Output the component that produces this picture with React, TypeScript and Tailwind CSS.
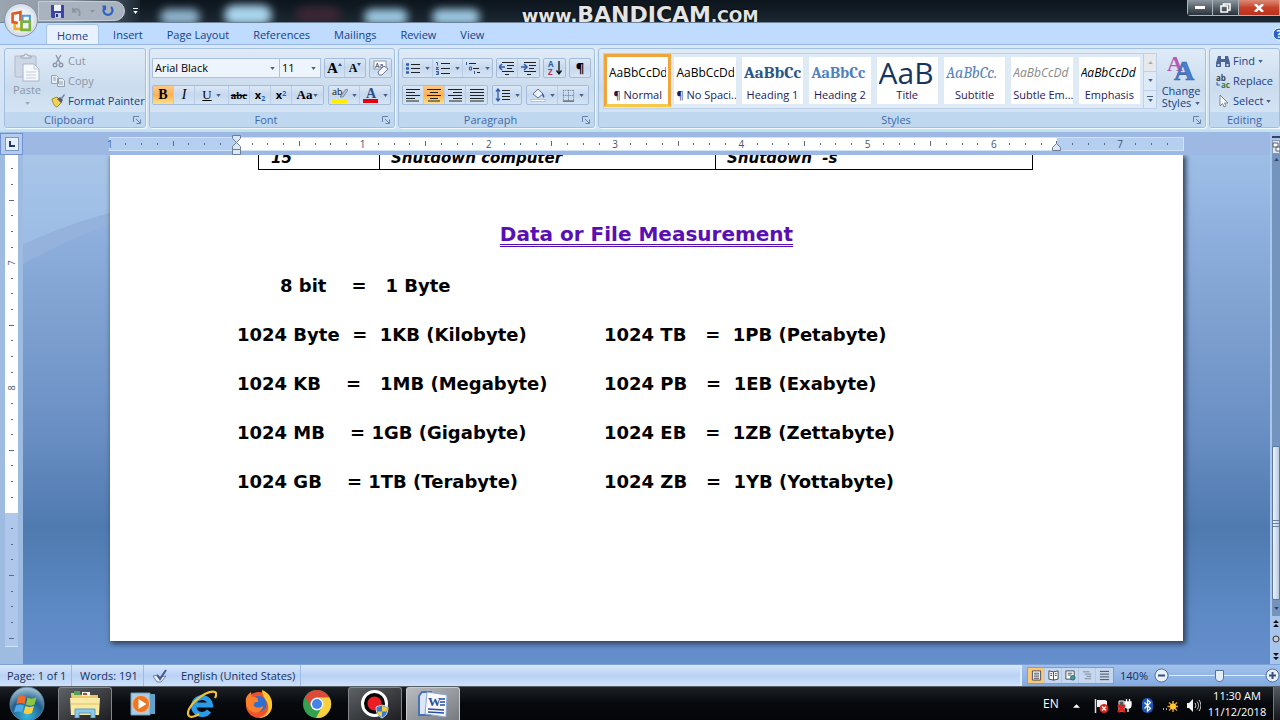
import type { ReactNode } from "react";
import clsx from "clsx";

const tabs = ["Home", "Insert", "Page Layout", "References", "Mailings", "Review", "View"];

const styles = [
  { name: "¶ Normal", sample: "AaBbCcDd", look: "text-[12px] text-black" },
  { name: "¶ No Spaci...", sample: "AaBbCcDd", look: "text-[12px] text-black" },
  { name: "Heading 1", sample: "AaBbCc", look: "font-serif font-bold text-[17px] text-[#2b5587]" },
  { name: "Heading 2", sample: "AaBbCc", look: "font-serif font-bold text-[16px] text-[#4f81bd]" },
  { name: "Title", sample: "AaB", look: "text-[30px] text-[#17365d]" },
  { name: "Subtitle", sample: "AaBbCc.", look: "font-serif italic text-[16px] text-[#5484bb]" },
  { name: "Subtle Em...", sample: "AaBbCcDd", look: "italic text-[12px] text-[#8a8a8a]" },
  { name: "Emphasis", sample: "AaBbCcDd", look: "italic text-[12px] text-black" },
];

const leftLines = [
  "1024 Byte  =  1KB (Kilobyte)",
  "1024 KB    =   1MB (Megabyte)",
  "1024 MB    = 1GB (Gigabyte)",
  "1024 GB    = 1TB (Terabyte)",
];

const rightLines = [
  "1024 TB   =  1PB (Petabyte)",
  "1024 PB   =  1EB (Exabyte)",
  "1024 EB   =  1ZB (Zettabyte)",
  "1024 ZB   =  1YB (Yottabyte)",
];

function Arrow({ className = "text-[#4a5f8a]" }: { className?: string }) {
  return (
    <svg viewBox="0 0 6 4" className={clsx("w-[5px] h-[3px] shrink-0", className)}>
      <path d="M0 0h6L3 4z" fill="currentColor" />
    </svg>
  );
}

type GroupProps = {
  title: string;
  launcher?: boolean;
  className?: string;
  children: ReactNode;
};

function Group({ title, launcher, className, children }: GroupProps) {
  return (
    <section
      className={clsx(
        "h-20 flex flex-col rounded-[3px] border border-[#a3bfde] overflow-hidden bg-linear-to-b from-[#dfebf7] via-[#cbdcee] to-[#d9e9f8] shadow-[1px_1px_0_#f0f8ff]",
        className
      )}
    >
      <div className="flex-1 min-h-0">{children}</div>
      <div className="h-[15px] bg-[#c0d7f0] flex items-center text-[#3e6aaa]">
        <span className="flex-1 text-center leading-[14px]">{title}</span>
        {launcher && (
          <button type="button" aria-label={`${title} options`} className="mr-1">
            <svg viewBox="0 0 8 8" className="size-[8px]" fill="none" stroke="#6684aa">
              <path d="M.5 6V.5H6M3 3l4 4M7.5 3.5v4h-4" />
            </svg>
          </button>
        )}
      </div>
    </section>
  );
}

function Box({ children }: { children: ReactNode }) {
  return (
    <div className="h-5 flex border border-[#a4bbd9] rounded-[2px] divide-x divide-[#b9cde6] bg-linear-to-b from-[#dbe8f6] via-[#c6d8ee] to-[#d6e5f5]">
      {children}
    </div>
  );
}

type ToolProps = {
  label: string;
  active?: boolean;
  arrow?: boolean;
  width?: string;
  children: ReactNode;
};

function Tool({ label, active, arrow, width = "w-[21px]", children }: ToolProps) {
  return (
    <button
      type="button"
      aria-label={label}
      className={clsx(
        "flex items-center justify-center gap-1 text-black",
        width,
        active && "bg-linear-to-b from-[#fbc987] via-[#fbb04e] to-[#fde08c]"
      )}
    >
      {children}
      {arrow && <Arrow />}
    </button>
  );
}

function Lines({ d, children }: { d: string; children?: ReactNode }) {
  return (
    <svg viewBox="0 0 16 14" className="w-[16px] h-[14px] shrink-0" fill="none" stroke="#222" strokeWidth="1">
      <path d={d} />
      {children}
    </svg>
  );
}

function ClipboardGroup() {
  return (
    <Group title="Clipboard" launcher className="w-[142px]">
      <div className="flex h-full">
        <button type="button" className="w-[44px] shrink-0 pt-1 flex flex-col items-center text-[#8d95a3]">
          <svg viewBox="0 0 26 29" className="w-[26px] h-[29px]">
            <rect x="1" y="3" width="21" height="21" rx="1" fill="#cdd7e6" stroke="#aeb9cb" />
            <path d="M7 5V3h3a2 2 0 0 1 4 0h3v2z" fill="#e7ecf3" stroke="#98a3b5" />
            <path d="M9 11h11l5 5v12H9z" fill="#f6f9fc" stroke="#a9b4c6" />
            <path d="M20 11v5h5M12 19h10M12 22h10M12 25h10" fill="none" stroke="#c3ccda" />
          </svg>
          <span className="leading-[16px]">Paste</span>
          <span className="pt-1">
            <Arrow className="text-[#9ba6b8]" />
          </span>
        </button>
        <div className="flex flex-col pt-[2px] pl-[2px]">
          <button type="button" className="h-[20px] flex items-center gap-[3px] text-[#8d95a3]">
            <svg viewBox="0 0 14 14" className="size-[14px]" fill="none" stroke="#8d99ac" strokeWidth="1.4">
              <path d="M5 1l4 8M10 1L5 9" />
              <circle cx="4" cy="11" r="1.8" />
              <circle cx="10" cy="11" r="1.8" />
            </svg>
            Cut
          </button>
          <button type="button" className="h-[20px] flex items-center gap-[3px] text-[#8d95a3]">
            <svg viewBox="0 0 14 14" className="size-[14px]" fill="#e8eef6" stroke="#94a0b4">
              <path d="M.5 1.5h5l2 2v6h-7zM6.500 4.500h5l2 2v6h-7z" />
              <path d="M2 4h3M2 6h3M8 8h4M8 10h4" />
            </svg>
            Copy
          </button>
          <button type="button" className="h-[20px] flex items-center gap-[3px] whitespace-nowrap text-[#15428b]">
            <svg viewBox="0 0 14 14" className="size-[14px] shrink-0">
              <path d="M1 5l5-2 5 5-5 5c-2 0-4-3-5-8z" fill="#f4d34e" stroke="#a88a24" />
              <path d="M6 5l3-2 3 3-2 3z" fill="#555f75" />
              <path d="M10 4l3-4 1 1-3 4z" fill="#6c7da0" />
            </svg>
            Format Painter
          </button>
        </div>
      </div>
    </Group>
  );
}

function FontGroup() {
  return (
    <Group title="Font" launcher className="w-[246px]">
      <div className="px-[2px] pt-[9px] flex flex-col gap-[7px]">
        <div className="flex gap-[3px]">
          <div className="flex h-5">
            <label className="relative flex items-center w-[128px] bg-[#eef4fb] border border-[#abc1de]">
              <select aria-label="Font name" className="appearance-none w-full px-[2px] text-black outline-none">
                <option>Arial Black</option>
              </select>
              <span className="absolute right-1">
                <Arrow />
              </span>
            </label>
            <label className="relative flex items-center w-[41px] bg-[#eef4fb] border border-l-0 border-[#abc1de]">
              <select aria-label="Font size" className="appearance-none w-full px-[2px] text-black outline-none">
                <option>11</option>
              </select>
              <span className="absolute right-1">
                <Arrow />
              </span>
            </label>
          </div>
          <Box>
            <Tool label="Grow font" width="w-5">
              <span className="font-['Liberation_Serif'] font-bold text-[15px] leading-none">A</span>
              <svg viewBox="0 0 4 3" className="w-1 h-[3px] -ml-1 mb-2">
                <path d="M0 3h4L2 0z" fill="#2b4c8c" />
              </svg>
            </Tool>
            <Tool label="Shrink font" width="w-5">
              <span className="font-['Liberation_Serif'] font-bold text-[12px] leading-none">A</span>
              <svg viewBox="0 0 4 3" className="w-1 h-[3px] -ml-1 mb-2">
                <path d="M0 0h4L2 3z" fill="#2b4c8c" />
              </svg>
            </Tool>
          </Box>
          <Box>
            <Tool label="Clear formatting">
              <svg viewBox="0 0 18 16" className="w-[18px] h-4">
                <rect x="2" y="1" width="12" height="8" fill="#fff" stroke="#8e9ab0" />
                <text x="3" y="8" fontSize="7" fill="#222">Aa</text>
                <path d="M6 12l6-6 4 3-6 6H7z" fill="#f4f6fa" stroke="#6d7d9a" />
              </svg>
            </Tool>
          </Box>
        </div>
        <div className="flex gap-1">
          <Box>
            <Tool label="Bold" active>
              <b className="font-['Liberation_Serif'] text-[14px]">B</b>
            </Tool>
            <Tool label="Italic">
              <i className="font-['Liberation_Serif'] text-[14px]">I</i>
            </Tool>
            <Tool label="Underline" arrow width="w-[34px]">
              <u className="font-['Liberation_Serif'] text-[13px]">U</u>
            </Tool>
            <Tool label="Strikethrough">
              <s className="font-['Liberation_Serif'] font-bold text-[11px]">abc</s>
            </Tool>
            <Tool label="Subscript">
              <span className="font-bold text-[11px]">
                x<sub className="text-[7px] text-[#2b5fb5]">2</sub>
              </span>
            </Tool>
            <Tool label="Superscript">
              <span className="font-bold text-[11px]">
                x<sup className="text-[7px] text-[#2b5fb5]">2</sup>
              </span>
            </Tool>
            <Tool label="Change case" width="w-[31px]" arrow>
              <span className="font-['Liberation_Serif'] font-bold text-[13px] -mr-[3px]">Aa</span>
            </Tool>
          </Box>
          <Box>
            <Tool label="Highlight" arrow width="w-[31px]">
              <svg viewBox="0 0 16 16" className="size-4">
                <text x="0" y="8" fontSize="9" fill="#111">ab</text>
                <path d="M8 10l6-8 2 1-5 7z" fill="#b9c4d6" stroke="#5b6a86" strokeWidth=".7" />
                <path d="M0 12h15v4H0z" fill="#ffee00" />
              </svg>
            </Tool>
            <Tool label="Font color" arrow width="w-[30px]">
              <svg viewBox="0 0 16 16" className="size-4">
                <text x="3" y="11" fontSize="14" fontWeight="700" fontFamily="Liberation Serif" fill="#2c4d86">A</text>
                <path d="M0 12h15v4H0z" fill="#e8000f" />
              </svg>
            </Tool>
          </Box>
        </div>
      </div>
    </Group>
  );
}

function ParagraphGroup() {
  return (
    <Group title="Paragraph" launcher className="w-[197px]">
      <div className="px-[3px] pt-[9px] flex flex-col gap-[7px]">
        <div className="flex gap-[3px]">
          <Box>
            <Tool label="Bullets" arrow width="w-[30px]">
              <Lines d="M6 3.500h9M6 7.500h9M6 11.500h9">
                <path d="M1 3.500h3M1 7.500h3M1 11.500h3" stroke="#2f5fb0" strokeWidth="2.500" />
              </Lines>
            </Tool>
            <Tool label="Numbering" arrow width="w-[30px]">
              <Lines d="M6 2.500h9M6 7.500h9M6 12.500h9">
                <path d="M1 1.500h1.500v3M1 6.500h2.500L1 8.500h3M1 10.500h2.500v3H1M1.500 12h2" stroke="#2f5fb0" />
              </Lines>
            </Tool>
            <Tool label="Multilevel list" arrow width="w-[29px]">
              <Lines d="M4 2.500h7M8 7.500h6M12 11.500h3">
                <path d="M1.500 1v3M4.500 6v3h2v-3h-2M9.500 10v3" stroke="#2f5fb0" />
              </Lines>
            </Tool>
          </Box>
          <Box>
            <Tool label="Decrease indent">
              <Lines d="M3 1.500h12M8 4.500h7M8 7.500h5M3 10.500h12M6 13.500h4">
                <path d="M0 6h6M3 3L0 6l3 3" stroke="#2f5fb0" strokeWidth="1.500" />
              </Lines>
            </Tool>
            <Tool label="Increase indent">
              <Lines d="M3 1.500h12M8 4.500h7M8 7.500h5M3 10.500h12M6 13.500h4">
                <path d="M0 6h6M3 3l3 3-3 3" stroke="#2f5fb0" strokeWidth="1.500" />
              </Lines>
            </Tool>
          </Box>
          <Box>
            <Tool label="Sort">
              <svg viewBox="0 0 16 16" className="size-4">
                <text x="1" y="7" fontSize="8" fontWeight="700" fill="#2f5fb0">A</text>
                <text x="1" y="15" fontSize="8" fontWeight="700" fill="#b0344a">Z</text>
                <path d="M12 1v12M9.500 10.500L12 14l2.500-3.500" fill="none" stroke="#111" strokeWidth="1.300" />
              </svg>
            </Tool>
          </Box>
          <Box>
            <Tool label="Show marks" width="w-5">
              <span className="font-bold text-[13px]">¶</span>
            </Tool>
          </Box>
        </div>
        <div className="flex gap-1">
          <Box>
            <Tool label="Align left">
              <Lines d="M1 1.500h14M1 4.500h9M1 7.500h14M1 10.500h9M1 13h13" />
            </Tool>
            <Tool label="Center" active>
              <Lines d="M1 1.500h14M4 4.500h8M1 7.500h14M4 10.500h8M2 13h12" />
            </Tool>
            <Tool label="Align right">
              <Lines d="M1 1.500h14M6 4.500h9M1 7.500h14M6 10.500h9M2 13h13" />
            </Tool>
            <Tool label="Justify">
              <Lines d="M1 1.500h14M1 4.500h14M1 7.500h14M1 10.500h14M1 13h14" />
            </Tool>
          </Box>
          <Box>
            <Tool label="Line spacing" arrow width="w-[28px]">
              <Lines d="M7 2.500h8M7 5.500h8M7 8.500h8M7 11.500h8">
                <path d="M3 1v12M1 3.500L3 1l2 2.500M1 10.500L3 13l2-2.500" stroke="#2f5fb0" strokeWidth="1.300" />
              </Lines>
            </Tool>
          </Box>
          <Box>
            <Tool label="Shading" arrow width="w-[31px]">
              <svg viewBox="0 0 16 14" className="w-4 h-[14px]">
                <path d="M3 6l5-5 5 5-5 4z" fill="#eef3fa" stroke="#5f6f8c" />
                <path d="M12 5c2 1 3 3 2 5-1-1-2-2-2-5z" fill="#2f5fb0" />
                <path d="M1 11.500h14v2H1z" fill="#fff" stroke="#8894a8" strokeWidth=".5" />
              </svg>
            </Tool>
            <Tool label="Borders" arrow width="w-[30px]">
              <svg viewBox="0 0 14 14" className="size-[13px]" fill="none" stroke="#5f6f8c">
                <path d="M1 1.500h12M1 7h12M1.500 1v12M7 1v12M12.500 1v12" strokeDasharray="1 1" />
                <path d="M1 13h12" stroke="#222" />
              </svg>
            </Tool>
          </Box>
        </div>
      </div>
    </Group>
  );
}

function StylesGroup() {
  return (
    <Group title="Styles" launcher className="flex-1 min-w-0">
      <div className="flex pt-1 pl-1">
        <div className="flex-1 min-w-0 h-[56px] flex border border-[#bdd2ea] bg-[#dfeaf7]">
          {styles.map((style, i) => (
            <button
              key={style.name}
              type="button"
              className={clsx(
                "flex-1 min-w-0 h-[53px] border-[3px] text-[#1e1a5a]",
                i === 0 ? "border-[#efa53a] border-b-[#f5c94a]" : "border-transparent"
              )}
            >
              <span className="h-full flex flex-col bg-white overflow-hidden px-[2px]">
                <span className={clsx("h-[30px] leading-[32px] overflow-hidden whitespace-nowrap text-left", style.look)}>
                  {style.sample}
                </span>
                <span className="leading-[15px] text-center whitespace-nowrap">{style.name}</span>
              </span>
            </button>
          ))}
          <div className="w-[13px] flex flex-col border-l border-[#bdd2ea] divide-y divide-[#bdd2ea]">
            <button type="button" aria-label="Scroll styles up" className="flex-1 flex items-center justify-center bg-[#e8e9ec]">
              <Arrow className="rotate-180 text-[#a9adb5]" />
            </button>
            <button type="button" aria-label="Scroll styles down" className="flex-1 flex items-center justify-center">
              <Arrow />
            </button>
            <button type="button" aria-label="More styles" className="flex-1 flex flex-col gap-[2px] items-center justify-center">
              <span className="w-[6px] h-px bg-[#4a5f8a]" />
              <Arrow />
            </button>
          </div>
        </div>
        <button type="button" className="w-[48px] flex flex-col items-center text-[#15428b] leading-[12px]">
          <svg viewBox="0 0 28 28" className="size-[28px] shrink-0" fontFamily="Liberation Serif" fontWeight="700">
            <text x="0" y="18" fontSize="22" fill="#b957b5">A</text>
            <text x="7" y="27" fontSize="28" fill="#4b7fd0" stroke="#2f5da8" strokeWidth=".6">A</text>
          </svg>
          <span className="mt-1">Change</span>
          <span className="flex items-center gap-1">
            Styles <Arrow />
          </span>
        </button>
      </div>
    </Group>
  );
}

function EditingGroup() {
  return (
    <Group title="Editing" className="w-[71px]">
      <div className="flex flex-col pt-[2px] pl-[6px] text-[#15428b]">
        <button type="button" className="h-[20px] flex items-center gap-[3px]">
          <svg viewBox="0 0 14 13" className="w-[14px] h-[13px] shrink-0" fill="#4b6594">
            <path d="M2 1h3v3h4V1h3l2 7v4H9V7H5v5H0V8z" />
            <path d="M1.500 9h2v2h-2zM10.500 9h2v2h-2z" fill="#cfdcf0" />
          </svg>
          Find <Arrow />
        </button>
        <button type="button" className="h-[20px] flex items-center gap-[3px] whitespace-nowrap">
          <svg viewBox="0 0 14 14" className="size-[14px] shrink-0" fontWeight="700">
            <text x="0" y="7" fontSize="8" fill="#444">ab</text>
            <text x="5" y="14" fontSize="8" fill="#3a7d3a">ac</text>
            <path d="M1 8v3h3" fill="none" stroke="#2f5fb0" />
          </svg>
          Replace
        </button>
        <button type="button" className="h-[20px] flex items-center gap-[3px]">
          <svg viewBox="0 0 14 14" className="size-[14px] shrink-0">
            <path d="M4 1v11l2.500-2.500L8 13l2-1-1.500-3H12z" fill="#fff" stroke="#7b8698" />
          </svg>
          Select <Arrow />
        </button>
      </div>
    </Group>
  );
}

function TitleBar() {
  return (
    <header className="relative h-[23px] flex items-start justify-between bg-linear-to-b from-[#0d151d] to-[#1b2731] border-b border-[#6f8399] overflow-hidden">
      <div className="absolute inset-0 flex items-center pl-[160px] gap-6 blur-[4px]">
        <span className="w-10 h-4 mt-3 rounded-full bg-[#8fb4cc]" />
        <span className="w-12 h-5 mt-2 rounded-full bg-[#a9d5ec]" />
        <span className="w-11 h-4 mt-2 rounded-full bg-[#3c2634]" />
        <span className="w-11 h-4 mt-3 rounded-full bg-[#9dc9e2]" />
        <span className="w-12 h-4 mt-3 rounded-full bg-[#9dc9e2]" />
      </div>
      <div className="relative h-[22px] w-[140px] bg-linear-to-r from-[#9aa5b0] via-[#8d98a4] to-[#1b2731]">
        <div className="h-5 mt-px ml-[38px] w-[87px] flex items-center justify-between pl-3 pr-[10px] rounded-r-full border border-[#c3ccd6] bg-[#a9b3bf]">
          <button type="button" aria-label="Save">
            <svg viewBox="0 0 13 13" className="size-[13px]">
              <path d="M0 0h13v13H1L0 12z" fill="#3b45a8" />
              <path d="M3 0h7v6H3z" fill="#eef2fb" />
              <path d="M4 8h6v5H4z" fill="#c6cfe8" />
              <path d="M5 9h2v3H5z" fill="#2b3280" />
            </svg>
          </button>
          <button type="button" aria-label="Undo" className="flex items-center gap-2 text-[#87919e]">
            <svg viewBox="0 0 12 12" className="size-[11px]" fill="none" stroke="#8b96a4" strokeWidth="2">
              <path d="M2 2v4h4M2 6c3-5 9-3 7 5" />
            </svg>
            <Arrow className="text-[#87919e]" />
          </button>
          <button type="button" aria-label="Redo">
            <svg viewBox="0 0 12 12" className="size-[12px]" fill="none" stroke="#2d62c4" strokeWidth="2.200">
              <path d="M3 2a4.500 4.500 0 1 0 6 0M3 5V1.500H.500" />
            </svg>
          </button>
        </div>
        <button type="button" aria-label="Customize toolbar" className="absolute right-[2px] top-2 flex flex-col gap-[2px] items-center">
          <span className="w-[5px] h-px bg-white" />
          <Arrow className="text-white" />
        </button>
      </div>
      <div className="relative h-4 flex rounded-bl border border-t-0 border-[#aab4be] divide-x divide-[#aab4be]">
        <button type="button" aria-label="Minimize" className="w-[25px] flex items-center justify-center bg-linear-to-b from-[#8d979f] to-[#2a333b]">
          <span className="w-[10px] h-[3px] bg-white" />
        </button>
        <button type="button" aria-label="Restore" className="w-[26px] flex items-center justify-center bg-linear-to-b from-[#8d979f] to-[#2a333b]">
          <svg viewBox="0 0 11 10" className="w-[11px] h-[10px]" fill="none" stroke="#fff" strokeWidth="1.500">
            <path d="M3.500 2.500V1h6.500v6H8M1 3h6.500v6H1z" />
          </svg>
        </button>
        <button type="button" aria-label="Close" className="w-[40px] flex items-center justify-center bg-linear-to-b from-[#dc8a78] via-[#c8412a] to-[#b8311c]">
          <svg viewBox="0 0 10 8" className="w-[10px] h-[8px]" stroke="#fff" strokeWidth="2.500">
            <path d="M1 0l8 8M9 0L1 8" />
          </svg>
        </button>
      </div>
      <div className="absolute inset-x-0 top-1 flex justify-center items-baseline pointer-events-none text-[#e4e4e4] font-['DejaVu_Sans'] font-bold leading-[22px] [text-shadow:0_0_3px_#000]">
        <span className="text-[18px]">www.</span>
        <span className="text-[22px]">BANDICAM</span>
        <span className="text-[16px]">.COM</span>
      </div>
    </header>
  );
}

function OfficeButton() {
  return (
    <button
      type="button"
      aria-label="Office menu"
      className="absolute left-1 top-[3px] size-[34px] rounded-full border border-[#8594a8] bg-radial from-white via-[#e9edf3] to-[#b3bfce] flex items-center justify-center"
    >
      <svg viewBox="0 0 22 22" className="size-[23px]" fill="none" strokeWidth="2.500">
        <path d="M10 11.500V3L2.500 4.500v8l5 1" stroke="#e2581c" />
        <path d="M12 6.500h7v6h-7z" stroke="#4f9be0" strokeWidth="2" />
        <path d="M4.500 14v5H11v-6" stroke="#f2b21c" />
        <path d="M11 12h8v8h-8z" stroke="#7ab33c" />
      </svg>
    </button>
  );
}

// one cell is an eighth of an inch, centred on its mark
function HorizontalRuler() {
  const marks = Array.from({ length: 67 }, (_, i) => i - 7);
  return (
    <div className="relative h-3 flex bg-[#b4cff0] outline outline-[#cfe2f8] text-[10px] leading-3 text-[#44546e]">
      <div className="absolute inset-0 flex">
        <span className="flex-[8]" />
        <span className="flex-[52] bg-white" />
        <span className="flex-[8]" />
      </div>
      <span className="relative flex-[1] min-w-0 -indent-[3px]">1</span>
      {marks.map((m) => (
        <span key={m} className="relative flex-[2] min-w-0 flex items-center justify-center">
          {m % 8 === 0 && m > 0 ? (
            m / 8
          ) : m === 0 ? null : m % 4 === 0 ? (
            <span className="w-px h-[5px] bg-[#5b6b85]" />
          ) : (
            <span className="w-px h-[2px] bg-[#5b6b85]" />
          )}
        </span>
      ))}
      <span className="flex-[1] min-w-0" />
      <div className="absolute inset-x-0 -top-[3px] flex">
        <span className="flex-[8]" />
        <div className="flex-[52] flex justify-between items-start">
          <svg viewBox="0 0 9 20" className="w-[9px] h-5 -ml-[4px]" fill="#dce8f6" stroke="#6d7d96">
            <path d="M.5.5h8v3l-4 4-4-4zM.5 14.500v-3l4-4 4 4v3zM.5 14.500h8v5h-8z" />
          </svg>
          <svg viewBox="0 0 9 8" className="w-[9px] h-2 mt-2 -mr-[4px]" fill="#dce8f6" stroke="#6d7d96">
            <path d="M.5 7.500v-3l4-4 4 4v3z" />
          </svg>
        </div>
        <span className="flex-[8]" />
      </div>
    </div>
  );
}

function VerticalRuler() {
  const marks = Array.from({ length: 31 }, (_, i) => i + 50);
  return (
    <div className="w-[23px] bg-[#9ebce2] pl-[5px] pr-[5px] pb-[17px] flex">
      <div className="flex-1 flex flex-col pt-[6px] border-b border-[#cfe2f8] bg-linear-to-b from-white from-73% to-[#aec7ea] to-73% text-[9px] leading-3 text-[#44546e]">
        {marks.map((m) => (
          <span key={m} className="flex-1 min-h-0 flex items-center justify-center">
            {m === 56 || m === 64 ? (
              <span className="-rotate-90">{m / 8}</span>
            ) : m === 72 ? null : m % 4 === 0 ? (
              <span className="w-[5px] h-px bg-[#5b6b85]" />
            ) : (
              <span className="w-[2px] h-px bg-[#5b6b85]" />
            )}
          </span>
        ))}
      </div>
    </div>
  );
}

function Page() {
  return (
    <article className="mb-[23px] flex-1 min-w-0 bg-white overflow-hidden shadow-[2px_2px_5px_1px_#33445c] font-['DejaVu_Sans'] font-bold text-black">
      <table className="ml-[148px] -mt-[14px] w-[775px] table-fixed border-collapse italic text-[15px]">
        <tbody>
          <tr className="h-7 align-bottom">
            <td className="w-[121px] border border-black pl-3 pb-[3px] leading-none">15</td>
            <td className="w-[336px] border border-black pl-[11px] pb-[3px] leading-none">Shutdown computer</td>
            <td className="border border-black pl-[11px] pb-[3px] leading-none whitespace-pre">Shutdown  -s</td>
          </tr>
        </tbody>
      </table>
      <h1 className="mt-[46px] text-center text-[20px] leading-[36px] text-[#5a0fb4]">
        <span className="underline decoration-double decoration-1 underline-offset-3">Data or File Measurement</span>
      </h1>
      <div className="mt-[9px] pl-[127px] text-[18px] leading-[49px] whitespace-pre">
        <p className="pl-[43px]">8 bit    =   1 Byte</p>
        <div className="flex">
          <div className="w-[367px]">
            {leftLines.map((line) => (
              <p key={line}>{line}</p>
            ))}
          </div>
          <div>
            {rightLines.map((line) => (
              <p key={line}>{line}</p>
            ))}
          </div>
        </div>
      </div>
    </article>
  );
}

function ScrollColumn() {
  return (
    <div className="w-[10px] shrink-0 flex flex-col items-center overflow-hidden bg-[#a9c4ea] border-l-2 border-[#a8c8ee]">
      <span className="h-[2px] mt-1 w-full bg-[#33435f]" />
      <button type="button" aria-label="View ruler" className="h-[14px] mt-[2px] w-full bg-[#dfe6f0] border border-[#8c99ad] flex items-center justify-center">
        <svg viewBox="0 0 8 10" className="w-2 h-[10px] shrink-0" fill="#fff" stroke="#55627a">
          <path d="M1 1h5v4H1zM4 5h4v4H4z" />
        </svg>
      </button>
      <div className="flex-1 w-full flex flex-col items-center bg-[#7493bd]">
        <span className="py-1">
          <Arrow className="rotate-180 text-[#33435f]" />
        </span>
        <span className="flex-[283]" />
        <div className="flex-[153] w-full bg-linear-to-r from-[#f2f6fc] to-[#b7c8e0] border border-[#5b77a5] rounded-l-[2px] flex flex-col items-end justify-center gap-[2px]">
          <span className="w-[6px] h-px bg-[#6b7f9f]" />
          <span className="w-[6px] h-px bg-[#6b7f9f]" />
          <span className="w-[6px] h-px bg-[#6b7f9f]" />
        </div>
        <span className="h-4 flex items-center">
          <Arrow className="text-[#27407c]" />
        </span>
      </div>
      <svg viewBox="0 0 8 48" className="w-2 h-12 shrink-0">
        <path d="M1 7l3-3 3 3zM1 11l3-3 3 3zM1 37h6l-3 3zM1 41h6l-3 3z" fill="#111" />
        <circle cx="4" cy="23" r="3" fill="#c9cdd4" stroke="#333" />
      </svg>
    </div>
  );
}

function StatusBar() {
  return (
    <footer className="h-[22px] flex items-stretch border-t border-[#7ba0d4] bg-linear-to-b from-[#d8e7fb] via-[#b9d2f5] to-[#cfe1fa] text-[#15305f]">
      <span className="w-[72px] pl-[7px] flex items-center border-r border-[#9dbbe2]">Page: 1 of 1</span>
      <span className="w-[72px] pl-2 flex items-center border-r border-[#9dbbe2]">Words: 191</span>
      <span className="w-[31px] flex items-center justify-center">
        <svg viewBox="0 0 16 14" className="w-4 h-[14px]">
          <path d="M1 7l5-1 2 2 6-1-5 6H5z" fill="#e9eef8" stroke="#7383a8" />
          <path d="M5 6l3 4 6-9" fill="none" stroke="#46598c" strokeWidth="2" />
        </svg>
      </span>
      <span className="w-[126px] pl-[6px] flex items-center border-r border-[#9dbbe2]">English (United States)</span>
      <span className="flex-1" />
      <div className="w-[260px] shrink-0 pl-[5px] flex items-center border-l-2 border-[#dbe9fb] bg-linear-to-b from-[#a3c1eb] to-[#82aae2] overflow-hidden">
        <div className="h-[17px] flex border border-[#7f9fcb] bg-[#c6d8ef] divide-x divide-[#b2c8e6]">
          {["Print layout", "Full screen reading", "Web layout", "Outline", "Draft"].map((view, i) => (
            <button
              key={view}
              type="button"
              aria-label={view}
              className={clsx("w-[17px] flex items-center justify-center", i === 0 && "bg-[#fbc878]")}
            >
              <svg viewBox="0 0 12 12" className="size-[11px]" fill="none" stroke="#3d4450">
                {i === 0 && <path d="M1.500 1h9v10h-9zM3 3.500h6M3 5.500h6M3 7.500h6M3 9.500h6" fill="#fff" />}
                {i === 1 && <path d="M6 2L1 1v9l5 1 5-1V1zM6 2v9M2.500 4h2M2.500 6h2M7.500 4h2M7.500 6h2" fill="#fff" />}
                {i === 2 && (
                  <>
                    <path d="M1 1h9v9H1zM3 3.500h5M3 5.500h4" fill="#fff" />
                    <circle cx="8.500" cy="8.500" r="2.500" fill="#3f9a8d" stroke="#2d6c84" />
                  </>
                )}
                {i === 3 && <path d="M1 2h7M3 4.500h7M5 7h5M3 9.500h7" stroke="#7a8598" />}
                {i === 4 && <path d="M1 1.500h10M1 4.500h10M1 7.500h10M1 10.500h10" />}
              </svg>
            </button>
          ))}
        </div>
        <span className="w-[42px] text-center">140%</span>
        <button type="button" aria-label="Zoom out" className="shrink-0">
          <svg viewBox="0 0 15 15" className="size-[15px]">
            <circle cx="7.500" cy="7.500" r="6.500" fill="#e9f0fa" stroke="#54709f" />
            <path d="M4 7.500h7" stroke="#34507f" strokeWidth="2" />
          </svg>
        </button>
        <label className="relative w-[96px] shrink-0 flex items-center">
          <input
            type="range"
            aria-label="Zoom"
            min="0"
            max="100"
            defaultValue="53"
            className="appearance-none w-full h-px bg-[#e4eefb] [&::-webkit-slider-thumb]:appearance-none [&::-webkit-slider-thumb]:w-[9px] [&::-webkit-slider-thumb]:h-3 [&::-webkit-slider-thumb]:bg-[#e4ecf8] [&::-webkit-slider-thumb]:border [&::-webkit-slider-thumb]:border-[#54709f] [&::-webkit-slider-thumb]:rounded-b-[4px]"
          />
        </label>
        <button type="button" aria-label="Zoom in" className="shrink-0">
          <svg viewBox="0 0 15 15" className="size-[15px]">
            <circle cx="7.500" cy="7.500" r="6.500" fill="#e9f0fa" stroke="#54709f" />
            <path d="M4 7.500h7M7.500 4v7" stroke="#34507f" strokeWidth="2" />
          </svg>
        </button>
      </div>
    </footer>
  );
}

function TaskButton({ label, frame, children }: { label: string; frame?: string; children: ReactNode }) {
  return (
    <button type="button" aria-label={label} className={clsx("w-[54px] h-full flex items-center justify-center", frame)}>
      {children}
    </button>
  );
}

const openFrame = "border border-b-0 border-[#82868b] rounded-t-[3px] bg-linear-to-br from-[#5f6266] to-[#1d1f22]";

function Taskbar() {
  return (
    <nav className="h-[34px] flex bg-linear-to-b from-[#1c2126] via-[#07090d] to-[#04060a] border-t border-[#565f68] text-white">
      <div className="flex gap-1">
        <TaskButton label="Start">
          <svg viewBox="0 0 36 36" className="size-9 shrink-0">
            <defs>
              <radialGradient id="orb" cx="50%" cy="85%" r="80%">
                <stop offset="0" stopColor="#35b5e0" />
                <stop offset=".6" stopColor="#215f8e" />
                <stop offset="1" stopColor="#9dbfd4" />
              </radialGradient>
            </defs>
            <circle cx="18" cy="18" r="17" fill="url(#orb)" stroke="#5f7f94" />
            <path d="M9 11c3-2 5-2 8 0l-1.500 7c-3-1.500-5-1.500-8 0z" fill="#ee6a2c" />
            <path d="M18.500 11.500c3 1.500 5 1.500 9 0l-2 7c-3 1.500-5 1.500-8.500 0z" fill="#8dc63f" />
            <path d="M7 19.500c3-1.500 5-1.500 8 0l-2 7c-3-1.500-5-1.500-8 0z" fill="#4fa8e8" />
            <path d="M16.500 20c3 1.500 5 1.500 8.500 0l-2 7c-3 1.500-5 1.500-8.500 0z" fill="#fbcf3a" />
          </svg>
        </TaskButton>
        <TaskButton label="Windows Explorer" frame={openFrame}>
          <svg viewBox="0 0 32 28" className="w-8 h-7">
            <path d="M2 3h8l2 2h17v20H3z" fill="#e9c86a" />
            <path d="M5 1h6v4H5z" fill="#4fa35c" />
            <path d="M13 2h8v4h-8z" fill="#f3f3ee" />
            <path d="M14 3h4v2h-4z" fill="#c8412a" />
            <path d="M1 8h30l-1 17H2z" fill="#fae9a4" />
            <path d="M2 14h28" stroke="#f0d580" strokeWidth="2" />
            <path d="M6 28v-9h20v9h-4v-5H10v5z" fill="#8ecbea" stroke="#5b9dc4" />
          </svg>
        </TaskButton>
        <TaskButton label="Media Player">
          <svg viewBox="0 0 26 26" className="size-[26px]">
            <path d="M6 3h19v20H6z" fill="#5fa3cc" />
            <path d="M1 2h19v22H1z" fill="#a5cfe8" stroke="#6d9dbd" />
            <circle cx="11" cy="13" r="8.500" fill="#ee7623" stroke="#f7b98b" />
            <path d="M8.500 8l8 5-8 5z" fill="#fff" />
          </svg>
        </TaskButton>
        <TaskButton label="Internet Explorer">
          <svg viewBox="0 0 32 30" className="w-8 h-[30px]" fill="none">
            <path d="M9 16h16.500a8.500 8.500 0 1 0-1.500 6" stroke="#2c9be6" strokeWidth="5" />
            <path d="M4 27C-2 20 20 0 30 3c2 1 1 4 0 6M4 27c2 2 7 0 10-2" stroke="#f1c232" strokeWidth="2.200" />
          </svg>
        </TaskButton>
        <TaskButton label="Firefox">
          <svg viewBox="0 0 30 30" className="size-[30px]">
            <circle cx="15" cy="16" r="13" fill="#f0512b" />
            <path d="M18 1c8 3 11 10 10 17-1 7-7 11-13 11 8-3 10-8 9-13-1-5-6-8-6-15z" fill="#fdc52e" />
            <circle cx="14.500" cy="15" r="8" fill="#2f6fd0" />
            <path d="M2 9c2-4 4-5 5-6l1 5c4-1 7 2 6 5-3 0-5 1-4 4 3 3 7 1 9 0 0 5-6 8-10 6C3 21 1 15 2 9z" fill="#f9802c" />
          </svg>
        </TaskButton>
        <TaskButton label="Chrome">
          <svg viewBox="0 0 30 30" className="size-[30px]">
            <circle cx="15" cy="15" r="14" fill="#34a050" />
            <path d="M2.900 8A14 14 0 0 1 27.100 8L15 9a6 6 0 0 0-5.500 9z" fill="#de4a3a" />
            <path d="M27.500 8.500A14 14 0 0 1 14 29l6-11a6 6 0 0 0-4-9.500z" fill="#fbd03c" />
            <circle cx="15" cy="15" r="6.500" fill="#fff" />
            <circle cx="15" cy="15" r="5" fill="#4683ea" />
          </svg>
        </TaskButton>
        <TaskButton label="Bandicam" frame={openFrame}>
          <svg viewBox="0 0 30 30" className="size-[30px]">
            <circle cx="14.500" cy="14.500" r="12" fill="#050505" stroke="#fff" strokeWidth="3" />
            <circle cx="14.500" cy="14.500" r="7" fill="#ec1c24" />
            <path d="M22 16l6 2c0 6-2 9-6 11-4-2-6-5-6-11z" fill="#3a78c8" stroke="#d6dde8" />
            <path d="M22 17l5 1.500c0 1.500 0 2.500-.500 4H22zM22 22.500V28c-3-1.500-4-3-4.500-5.500z" fill="#f4cf3c" />
          </svg>
        </TaskButton>
        <TaskButton
          label="Microsoft Word"
          frame="border border-b-0 border-[#c8ccd0] rounded-t-[3px] bg-linear-to-br from-[#b9bcc0] to-[#777b80]"
        >
          <svg viewBox="0 0 30 28" className="w-[30px] h-7">
            <path d="M4 2h9v23H1V6z" fill="#dce6f6" stroke="#4a72b8" strokeWidth="2" />
            <path d="M9 2l20 3-1 22-21-3z" fill="#f7f9fd" stroke="#8ba6d4" />
            <text x="10" y="16" fontSize="13" fontWeight="700" fontFamily="Liberation Serif" fill="#2a4f9e">W</text>
            <path d="M22 9h5M22 12h5M22 15h5M10 19l16 1M10 22l16 1" stroke="#2a4f9e" strokeWidth="1.600" />
          </svg>
        </TaskButton>
      </div>
      <div className="ml-auto flex items-center">
        <span className="w-[30px] text-[12px]">EN</span>
        <span className="w-[21px]">
          <svg viewBox="0 0 8 4" className="w-[7px] h-1 mt-1">
            <path d="M0 4h8L4 0z" fill="#fff" />
          </svg>
        </span>
        <div className="flex gap-2 pt-1">
          <svg viewBox="0 0 15 15" className="size-[15px]">
            <path d="M1.500 1v14" stroke="#ddd" strokeWidth="1.500" />
            <path d="M3 2h8l2 1v6H3z" fill="#f2f2f2" />
            <circle cx="10" cy="10.500" r="4.500" fill="#d8291f" />
            <path d="M8 8.500l4 4M12 8.500l-4 4" stroke="#fff" strokeWidth="1.300" />
          </svg>
          <svg viewBox="0 0 15 15" className="size-[15px]">
            <path d="M2 3h5v10H2z" fill="#555" stroke="#eee" />
            <path d="M8 4h6v3c0 2-1 3-3 3s-3-1-3-3zM9.500 1v3M12.500 1v3M11 10v4" fill="#fff" stroke="#fff" strokeWidth="1.300" />
            <path d="M1 7l7 7M8 7l-7 7" stroke="#e0231a" strokeWidth="2.500" />
          </svg>
          <svg viewBox="0 0 15 15" className="size-[15px]">
            <rect x="2" y="0" width="11" height="15" rx="5" fill="#1c56b8" />
            <path d="M4.500 4.500l6 6L7.500 13V2l3 2.500-6 6" fill="none" stroke="#fff" strokeWidth="1.200" />
          </svg>
          <svg viewBox="0 0 15 15" className="size-[15px]">
            <path d="M0 11h1M3 11h1" stroke="#aaa" strokeWidth="2" />
            <path d="M10 3v11M4.500 8.500h11M6 4.500l8 8M14 4.500l-8 8" stroke="#e89c1c" strokeWidth="1.500" />
            <circle cx="10" cy="8.500" r="3" fill="#fcc93c" />
          </svg>
          <svg viewBox="0 0 15 15" className="size-[15px]">
            <path d="M1 5h2l4-4v13l-4-4H1z" fill="#f4f4f4" />
            <path d="M9 5c1 1.500 1 3.500 0 5M11 3.500c2 2.500 2 5.500 0 8M13 2c2.500 3.500 2.500 7.500 0 11" fill="none" stroke="#ddd" />
          </svg>
        </div>
        <div className="w-[72px] text-center leading-4">
          <div>11:30 AM</div>
          <div>11/12/2018</div>
        </div>
        <button type="button" aria-label="Show desktop" className="w-[7px] h-full border-l border-[#70767d] bg-linear-to-b from-[#555b62] to-[#14171b]" />
      </div>
    </nav>
  );
}

export default function App() {
  return (
    <div className="h-screen flex flex-col relative overflow-hidden bg-[#9db9e3] font-['Open_Sans','Noto_Sans',sans-serif] text-[11px] leading-[14px]">
      <TitleBar />
      <div className="h-[22px] flex items-end gap-1 pl-[46px] bg-[#bfdbff] border-b border-[#95b8e4]">
        {tabs.map((tab, i) => (
          <button
            key={tab}
            type="button"
            className={clsx(
              "h-5 px-[10px] pt-[2px] text-[#15428b] whitespace-nowrap",
              i === 0 && "rounded-t-[3px] border border-b-0 border-[#a5c6ea] bg-[#e9f2fc]"
            )}
          >
            {tab}
          </button>
        ))}
        <button type="button" aria-label="Help" className="ml-auto self-center -mr-[6px]">
          <svg viewBox="0 0 14 14" className="size-[14px]">
            <circle cx="7" cy="7" r="6" fill="#2b62c8" stroke="#fff" />
            <text x="7" y="11" fontSize="11" fontWeight="700" textAnchor="middle" fill="#fff">?</text>
          </svg>
        </button>
      </div>
      <OfficeButton />
      <div className="h-[87px] pt-[3px] pl-1 flex gap-[3px] bg-linear-to-b from-[#dbe8f7] to-[#cfe1f5] border-b-2 border-[#bfe0ee] overflow-hidden">
        <ClipboardGroup />
        <FontGroup />
        <ParagraphGroup />
        <StylesGroup />
        <EditingGroup />
      </div>
      <main className="flex-1 min-h-0 flex">
        <div className="flex-1 min-w-0 flex flex-col">
          <div className="h-[23px] flex items-center">
            <button type="button" aria-label="Tab stop" className="w-[23px] h-[22px] flex items-center justify-center border border-[#6f93cf] bg-[#b4cbee]">
              <span className="size-[14px] flex items-center justify-center bg-[#e6eefa] border border-[#7d97c3]">
                <span className="size-[6px] border-l-2 border-b-2 border-[#1f3a6e]" />
              </span>
            </button>
            <div className="flex-1 px-[87px]">
              <HorizontalRuler />
            </div>
          </div>
          <div className="flex-1 min-h-0 flex">
            <VerticalRuler />
            <div className="relative flex-1 min-w-0 px-[87px] flex overflow-hidden bg-[linear-gradient(to_bottom,#9dbfe6_0%,#8fb0de_15%,#7c9fcf_34%,#6a8fc4_54%,#4f7ab0_73%,#5d89c5_90%,#658fcc_100%)]">
              <svg viewBox="0 0 100 510" preserveAspectRatio="none" className="absolute left-0 top-0 w-[100px] h-full">
                <defs>
                  <linearGradient id="sky" x1="0" y1="0" x2="0" y2="1">
                    <stop offset="0" stopColor="#a9c6e8" />
                    <stop offset="1" stopColor="#9cbce6" />
                  </linearGradient>
                </defs>
                <path d="M0 0h100v55C60 64 25 78 0 90z" fill="url(#sky)" />
                <path d="M0 90C25 78 60 64 100 55v10C60 78 25 96 0 109z" fill="#94b2db" />
              </svg>
              <div className="relative flex-1 min-w-0 flex">
                <Page />
              </div>
            </div>
          </div>
        </div>
        <ScrollColumn />
      </main>
      <StatusBar />
      <Taskbar />
    </div>
  );
}
